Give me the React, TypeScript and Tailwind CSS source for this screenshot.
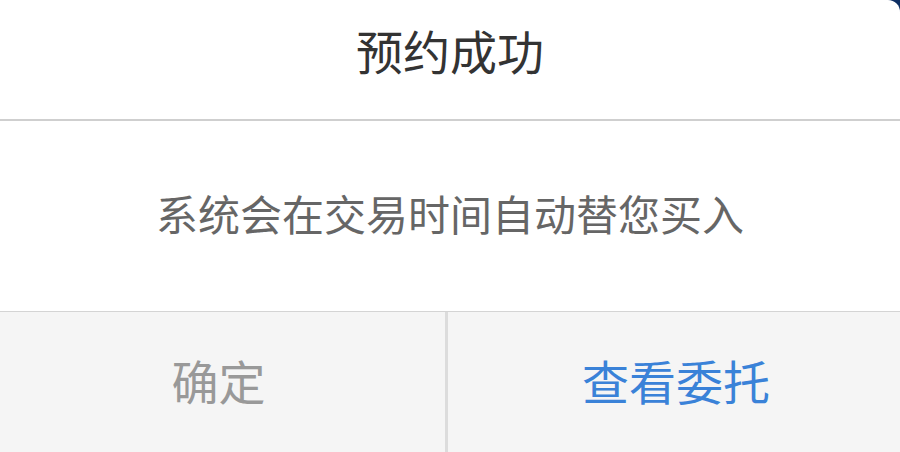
export default function App() {
  return (
    <div
      className="h-[452px] w-[900px] overflow-hidden bg-[#0d2f63]"
      style={{ fontFamily: '"Noto Sans CJK SC", "Noto Sans", sans-serif' }}
    >
      <div className="flex h-full flex-col overflow-hidden rounded-tr-[12px] bg-white">
        <div className="flex h-[121px] items-center justify-center border-b-2 border-[#cfcfcf] pb-[20px]">
          <span className="text-[47px] leading-none text-[#333333]">预约成功</span>
        </div>
        <div className="flex h-[191px] items-center justify-center border-b border-[#d4d4d4] pb-[6px]">
          <span className="text-[42px] leading-none text-[#666666]">系统会在交易时间自动替您买入</span>
        </div>
        <div className="flex flex-1 bg-[#f5f5f5] pb-[6px]">
          <button className="flex w-[445px] items-center justify-center pr-[8px] text-[47px] leading-none text-[#999999]">
            确定
          </button>
          <div className="-mb-[6px] w-[3px] bg-[#dcdcdc]" />
          <button className="flex flex-1 items-center justify-center pl-[4px] text-[47px] leading-none text-[#3a82d8]">
            查看委托
          </button>
        </div>
      </div>
    </div>
  );
}
